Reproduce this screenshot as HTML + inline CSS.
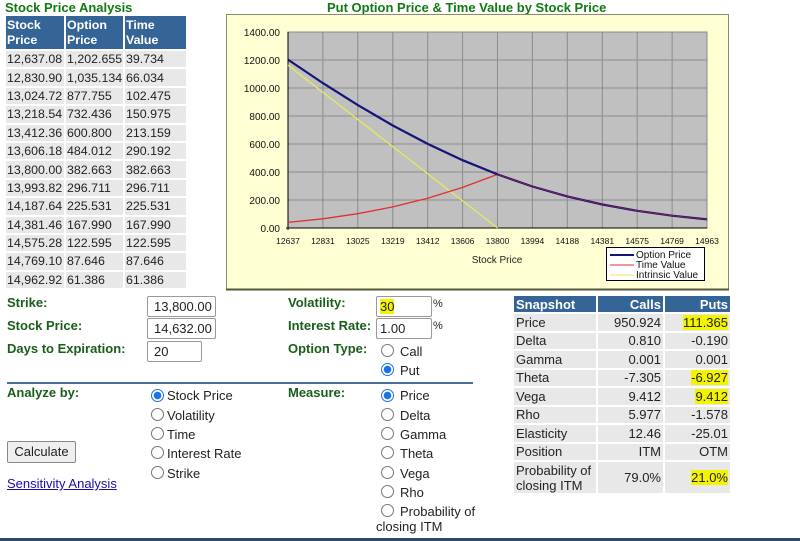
<!DOCTYPE html>
<html><head><meta charset="utf-8"><style>
*{margin:0;padding:0;box-sizing:border-box}
body{width:800px;height:541px;background:#fff;font-family:"Liberation Sans",Arial,sans-serif;font-size:13px;color:#222;position:relative;overflow:hidden}
.a{position:absolute;white-space:nowrap}
.g{color:#1a5e1a;font-weight:bold}
.inp{position:absolute;border:1px solid #999;border-radius:2px;background:#fff;padding-left:6px;line-height:19px;font-size:13px}
.rad{position:absolute;width:13px;height:13px;border:1px solid #777;border-radius:50%;background:#fff}
.rad.on{border:1px solid #1a73e8;background:radial-gradient(circle,#1a73e8 0 3.5px,#fff 4px)}
table{border-collapse:separate;border-spacing:2px;position:absolute}
td{background:#e8e8e8;padding:0 2px;font-size:13px}
th{background:#356496;color:#fff;font-weight:bold;text-align:left;padding:0 2px;font-size:13px;line-height:15px}
.lt td,.lt th{padding:0 1px;font-size:12.4px;overflow:hidden;white-space:nowrap}
.lt{table-layout:fixed;width:182px}
</style></head><body>
<div class="a g" style="left:5px;top:0;font-size:13px;color:#127a12">Stock Price Analysis</div>
<table class="lt" style="left:4px;top:14px">
<colgroup><col style="width:58px"><col style="width:57px"><col style="width:61px"></colgroup>
<tr><th style="height:33px">Stock<br>Price</th><th>Option<br>Price</th><th>Time<br>Value</th></tr>
<tr><td style="height:16.4px">12,637.08</td><td>1,202.655</td><td>39.734</td></tr>
<tr><td style="height:16.4px">12,830.90</td><td>1,035.134</td><td>66.034</td></tr>
<tr><td style="height:16.4px">13,024.72</td><td>877.755</td><td>102.475</td></tr>
<tr><td style="height:16.4px">13,218.54</td><td>732.436</td><td>150.975</td></tr>
<tr><td style="height:16.4px">13,412.36</td><td>600.800</td><td>213.159</td></tr>
<tr><td style="height:16.4px">13,606.18</td><td>484.012</td><td>290.192</td></tr>
<tr><td style="height:16.4px">13,800.00</td><td>382.663</td><td>382.663</td></tr>
<tr><td style="height:16.4px">13,993.82</td><td>296.711</td><td>296.711</td></tr>
<tr><td style="height:16.4px">14,187.64</td><td>225.531</td><td>225.531</td></tr>
<tr><td style="height:16.4px">14,381.46</td><td>167.990</td><td>167.990</td></tr>
<tr><td style="height:16.4px">14,575.28</td><td>122.595</td><td>122.595</td></tr>
<tr><td style="height:16.4px">14,769.10</td><td>87.646</td><td>87.646</td></tr>
<tr><td style="height:16.4px">14,962.92</td><td>61.386</td><td>61.386</td></tr>
</table>

<div class="a g" style="left:327px;top:0;color:#127a12">Put Option Price &amp; Time Value by Stock Price</div>
<svg class="a" style="left:0;top:0" width="800" height="300" font-family="Liberation Sans,Arial,sans-serif">
<rect x="226.5" y="14.5" width="502" height="275" fill="#ffffd4" stroke="#8a8a70" stroke-width="1"/>
<line x1="226" y1="289.5" x2="729" y2="289.5" stroke="#55553a" stroke-width="2"/>
<rect x="288" y="32" width="419" height="196" fill="#c0c0c0"/>
<g stroke="#8c8c8c" stroke-width="1">
<line x1="288" y1="60" x2="707" y2="60"/><line x1="288" y1="88" x2="707" y2="88"/><line x1="288" y1="116" x2="707" y2="116"/><line x1="288" y1="144" x2="707" y2="144"/><line x1="288" y1="172" x2="707" y2="172"/><line x1="288" y1="200" x2="707" y2="200"/>
<line x1="322.9" y1="32" x2="322.9" y2="228"/><line x1="357.8" y1="32" x2="357.8" y2="228"/><line x1="392.8" y1="32" x2="392.8" y2="228"/><line x1="427.7" y1="32" x2="427.7" y2="228"/><line x1="462.6" y1="32" x2="462.6" y2="228"/><line x1="497.5" y1="32" x2="497.5" y2="228"/><line x1="532.4" y1="32" x2="532.4" y2="228"/><line x1="567.3" y1="32" x2="567.3" y2="228"/><line x1="602.3" y1="32" x2="602.3" y2="228"/><line x1="637.2" y1="32" x2="637.2" y2="228"/><line x1="672.1" y1="32" x2="672.1" y2="228"/>
</g>
<rect x="288" y="32" width="419" height="196" fill="none" stroke="#888"/>
<line x1="288" y1="32" x2="288" y2="230" stroke="#000"/><line x1="286" y1="228" x2="707" y2="228" stroke="#000"/>
<polyline fill="none" stroke="#e8e860" stroke-width="1.3" points="288,65.2 497.5,228"/>
<polyline fill="none" stroke="#e03030" stroke-width="1.3" points="288,222.4 322.9,218.8 357.8,213.7 392.8,206.9 427.7,198.2 462.6,187.4 497.5,174.4"/>
<polyline fill="none" stroke="#14147a" stroke-width="2.2" points="288,59.6 322.9,83.1 357.8,105.1 392.8,125.5 427.7,143.9 462.6,160.2 497.5,174.4 532.4,186.5 567.3,196.4 602.3,204.5 637.2,210.8 672.1,215.7 707,219.4"/>
<polyline fill="none" stroke="#a02040" stroke-width="0.8" points="497.5,174.4 532.4,186.5 567.3,196.4 602.3,204.5 637.2,210.8 672.1,215.7 707,219.4"/>
<g font-size="10" fill="#111" text-anchor="end">
<text x="280" y="36">1400.00</text><text x="280" y="64">1200.00</text><text x="280" y="92">1000.00</text><text x="280" y="120">800.00</text><text x="280" y="148">600.00</text><text x="280" y="176">400.00</text><text x="280" y="204">200.00</text><text x="280" y="232">0.00</text>
</g>
<g font-size="8.5" fill="#111" text-anchor="middle">
<text x="288" y="244">12637</text><text x="322.9" y="244">12831</text><text x="357.8" y="244">13025</text><text x="392.8" y="244">13219</text><text x="427.7" y="244">13412</text><text x="462.6" y="244">13606</text><text x="497.5" y="244">13800</text><text x="532.4" y="244">13994</text><text x="567.3" y="244">14188</text><text x="602.3" y="244">14381</text><text x="637.2" y="244">14575</text><text x="672.1" y="244">14769</text><text x="707" y="244">14963</text>
</g>
<text x="497" y="263" font-size="10" text-anchor="middle" fill="#222">Stock Price</text>
<rect x="606.5" y="247.5" width="98" height="33" fill="#fff" stroke="#000"/>
<line x1="610" y1="255" x2="634" y2="255" stroke="#14147a" stroke-width="2"/>
<line x1="610" y1="265" x2="634" y2="265" stroke="#e03030"/>
<line x1="610" y1="275" x2="634" y2="275" stroke="#e8e860"/>
<g font-size="10" fill="#111"><text x="636" y="258">Option Price</text><text x="636" y="268">Time Value</text><text x="636" y="278">Intrinsic Value</text></g>
</svg>

<div class="a g" style="left:7px;top:295px">Strike:</div>
<div class="a g" style="left:7px;top:318px">Stock Price:</div>
<div class="a g" style="left:7px;top:341px">Days to Expiration:</div>
<div class="inp" style="left:147px;top:296px;width:69px;height:21px">13,800.00</div>
<div class="inp" style="left:147px;top:318px;width:69px;height:21px">14,632.00</div>
<div class="inp" style="left:147px;top:341px;width:55px;height:21px">20</div>
<div class="a g" style="left:288px;top:295px">Volatility:</div>
<div class="a g" style="left:288px;top:318px">Interest Rate:</div>
<div class="a g" style="left:288px;top:341px">Option Type:</div>
<div class="inp" style="left:376px;top:296px;width:56px;height:21px;padding-left:3px"><span style="background:#f4f400">30</span></div>
<div class="inp" style="left:376px;top:318px;width:56px;height:21px;padding-left:3px">1.00</div>
<div class="a" style="left:433px;top:298px;font-size:11px">%</div>
<div class="a" style="left:433px;top:320px;font-size:11px">%</div>
<div class="rad" style="left:381px;top:344px"></div><div class="a" style="left:400px;top:344px">Call</div>
<div class="rad on" style="left:381px;top:363px"></div><div class="a" style="left:400px;top:363px">Put</div>
<div class="a" style="left:7px;top:382px;width:466px;height:2px;background:#4a6f9a"></div>
<div class="a g" style="left:7px;top:385px">Analyze by:</div>
<div class="a g" style="left:288px;top:385px">Measure:</div>
<div class="rad on" style="left:151px;top:389px"></div><div class="a" style="left:167px;top:388px">Stock Price</div>
<div class="rad" style="left:151px;top:408px"></div><div class="a" style="left:167px;top:408px">Volatility</div>
<div class="rad" style="left:151px;top:427px"></div><div class="a" style="left:167px;top:427px">Time</div>
<div class="rad" style="left:151px;top:446px"></div><div class="a" style="left:167px;top:446px">Interest Rate</div>
<div class="rad" style="left:151px;top:466px"></div><div class="a" style="left:167px;top:466px">Strike</div>
<div class="rad on" style="left:381px;top:389px"></div><div class="a" style="left:400px;top:388px">Price</div>
<div class="rad" style="left:381px;top:408px"></div><div class="a" style="left:400px;top:408px">Delta</div>
<div class="rad" style="left:381px;top:427px"></div><div class="a" style="left:400px;top:427px">Gamma</div>
<div class="rad" style="left:381px;top:446px"></div><div class="a" style="left:400px;top:446px">Theta</div>
<div class="rad" style="left:381px;top:466px"></div><div class="a" style="left:400px;top:466px">Vega</div>
<div class="rad" style="left:381px;top:485px"></div><div class="a" style="left:400px;top:485px">Rho</div>
<div class="rad" style="left:381px;top:504px"></div><div class="a" style="left:400px;top:504px">Probability of</div>
<div class="a" style="left:376px;top:519px">closing ITM</div>
<div class="a" style="left:7px;top:441px;width:69px;height:22px;border:1px solid #888;border-radius:2px;background:#efefef;text-align:center;line-height:20px">Calculate</div>
<div class="a" style="left:7px;top:476px;color:#1a0dab;text-decoration:underline">Sensitivity Analysis</div>

<table style="left:512px;top:294px;border-spacing:2px">
<tr><th style="width:82px;height:16px">Snapshot</th><th style="width:65px;text-align:right">Calls</th><th style="width:65px;text-align:right">Puts</th></tr>
<tr><td style="height:16.5px">Price</td><td align="right">950.924</td><td align="right"><span style="background:#f4f400">111.365</span></td></tr>
<tr><td style="height:16.5px">Delta</td><td align="right">0.810</td><td align="right">-0.190</td></tr>
<tr><td style="height:16.5px">Gamma</td><td align="right">0.001</td><td align="right">0.001</td></tr>
<tr><td style="height:16.5px">Theta</td><td align="right">-7.305</td><td align="right"><span style="background:#f4f400">-6.927</span></td></tr>
<tr><td style="height:16.5px">Vega</td><td align="right">9.412</td><td align="right"><span style="background:#f4f400">9.412</span></td></tr>
<tr><td style="height:16.5px">Rho</td><td align="right">5.977</td><td align="right">-1.578</td></tr>
<tr><td style="height:16.5px">Elasticity</td><td align="right">12.46</td><td align="right">-25.01</td></tr>
<tr><td style="height:16.5px">Position</td><td align="right">ITM</td><td align="right">OTM</td></tr>
<tr><td style="height:31px;line-height:15px">Probability of<br>closing ITM</td><td align="right">79.0%</td><td align="right"><span style="background:#f4f400">21.0%</span></td></tr>
</table>
<div class="a" style="left:0;top:538px;width:800px;height:3px;background:#2a4a70"></div>
</body></html>
